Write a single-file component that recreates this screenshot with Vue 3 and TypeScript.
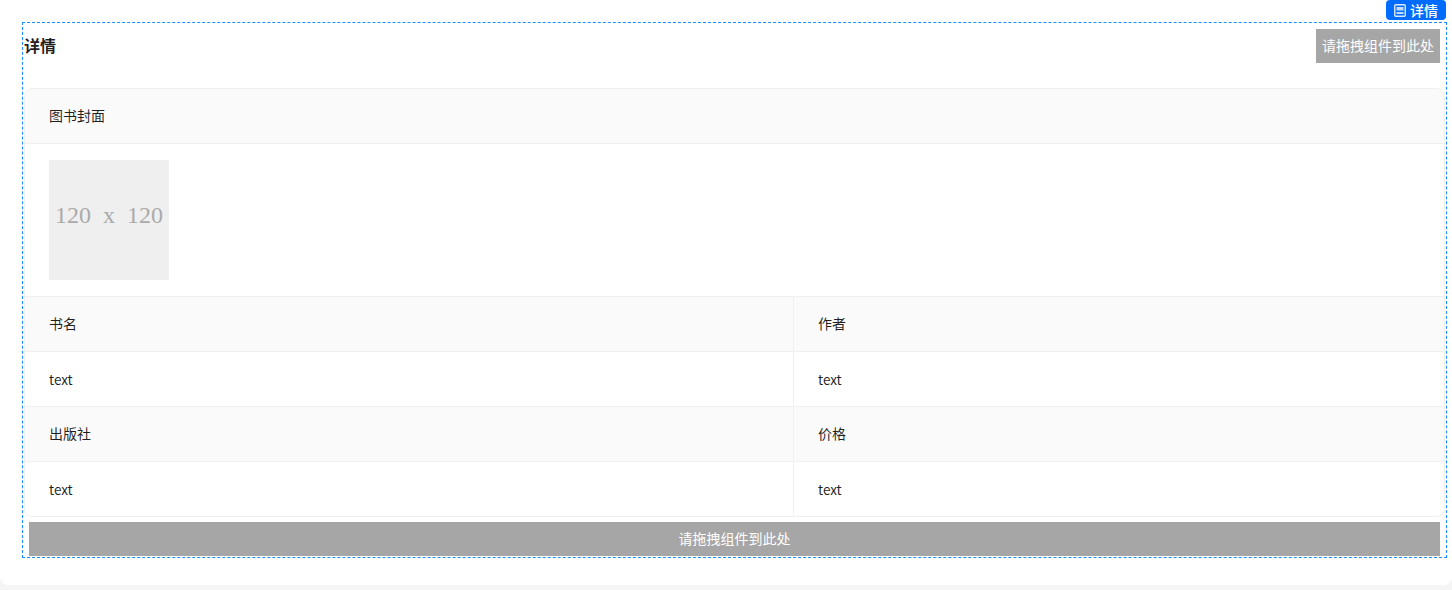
<script setup lang="ts">
interface Cell {
  label: string
  value: string
}
const rows: Cell[][] = [
  [
    { label: '书名', value: 'text' },
    { label: '作者', value: 'text' },
  ],
  [
    { label: '出版社', value: 'text' },
    { label: '价格', value: 'text' },
  ],
]
</script>

<template>
  <div class="page">
    <div class="card">
      <section class="design">
        <div class="badge">
          <svg class="badge-icon" viewBox="0 0 12 13" width="12" height="13" fill="none">
            <rect x="0.75" y="0.75" width="10.5" height="11.5" rx="1" stroke="#dbe9ff" stroke-width="1.4" />
            <rect x="2.5" y="3" width="7" height="3.5" fill="#c4dcff" />
            <rect x="2.5" y="8" width="7" height="2" fill="#c4dcff" />
          </svg>
          <span>详情</span>
        </div>
        <header class="head">
          <h2 class="title">详情</h2>
          <div class="slot slot-small">请拖拽组件到此处</div>
        </header>
        <div class="table">
          <div class="label cell wide">图书封面</div>
          <div class="cover-cell cell wide">
            <div class="cover">120 x 120</div>
          </div>
          <template v-for="(row, i) in rows" :key="i">
            <div v-for="c in row" :key="c.label" class="label cell">{{ c.label }}</div>
            <div
              v-for="c in row"
              :key="c.label + 'v'"
              class="value cell"
              :class="{ last: i === rows.length - 1 }"
            >
              {{ c.value }}
            </div>
          </template>
        </div>
        <div class="slot slot-wide">请拖拽组件到此处</div>
      </section>
    </div>
  </div>
</template>

<style>
html,
body {
  margin: 0;
  background: #f5f5f5;
}
</style>

<style scoped>
.page {
  height: 590px;
  overflow: hidden;
  font-family: "Noto Sans CJK SC", "Liberation Sans", sans-serif;
  font-size: 14px;
  color: rgba(0, 0, 0, 0.88);
}
.card {
  box-sizing: border-box;
  height: 585px;
  padding: 22px 5px 0 22px;
  background: #fff;
  border-radius: 0 0 8px 8px;
}
.design {
  position: relative;
  box-sizing: border-box;
  height: 536px;
  border: 1px dashed #1890ff;
}
.badge {
  position: absolute;
  top: -23px;
  right: 0;
  display: flex;
  align-items: center;
  justify-content: center;
  gap: 4px;
  width: 60px;
  height: 20px;
  box-sizing: border-box;
  border-radius: 4px;
  background: #006cff;
  color: #fff;
  font-size: 14px;
  font-weight: 500;
  line-height: 19px;
}
.badge-icon {
  flex: none;
}
.head {
  display: flex;
  align-items: flex-start;
  justify-content: space-between;
  height: 46px;
  margin-bottom: 19px;
}
.title {
  margin: 0;
  padding-left: 1px;
  font-size: 16px;
  font-weight: 600;
  line-height: 44px;
}
.slot {
  box-sizing: border-box;
  display: flex;
  align-items: center;
  justify-content: center;
  height: 34px;
  padding-bottom: 2px;
  background: #a6a6a6;
  color: #fff;
  font-size: 14px;
}
.slot-small {
  width: 124px;
  margin-right: 6px;
  margin-top: 6px;
}
.table {
  display: grid;
  grid-template-columns: 769px 1fr;
  box-sizing: border-box;
  height: 429px;
  margin: 0 1px;
  border: 1px solid #f0f0f0;
  border-radius: 8px;
  overflow: hidden;
  grid-template-rows: 55px 153px 55px 55px 55px 54px;
}
.cell {
  box-sizing: border-box;
  display: flex;
  align-items: center;
  padding: 0 24px 2px;
  border-bottom: 1px solid #f0f0f0;
}
.value {
  padding-bottom: 0;
  font-size: 13.5px;
}
.wide {
  grid-column: 1 / -1;
}
.label {
  background: #fafafa;
}
.label:not(.wide):nth-child(odd),
.value:nth-child(odd) {
  border-right: 1px solid #f0f0f0;
}
.last {
  border-bottom: 0;
}
.cover-cell {
  padding: 16px 24px;
  align-items: flex-start;
}
.cover {
  box-sizing: border-box;
  display: flex;
  align-items: center;
  justify-content: center;
  width: 120px;
  height: 120px;
  padding-bottom: 10px;
  background: #efefef;
  color: #aaa;
  font-family: "Liberation Serif", serif;
  font-size: 24px;
  word-spacing: 6px;
}
.slot-wide {
  margin: 5px 6px 0;
}
</style>
